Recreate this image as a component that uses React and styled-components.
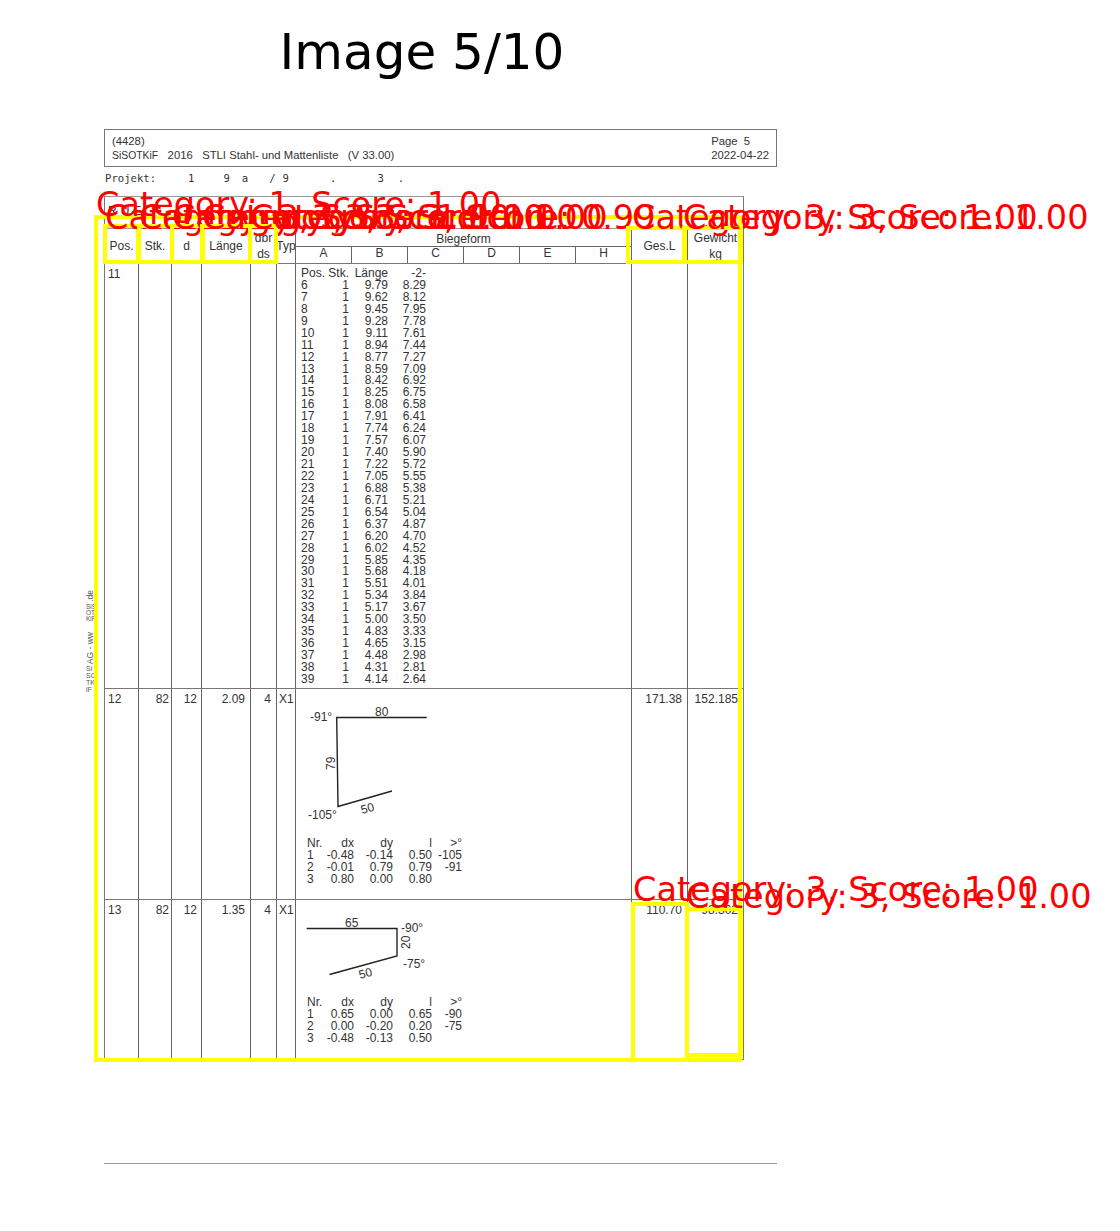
import React from 'react'
import styled, { createGlobalStyle } from 'styled-components'

const COLS = '33px 33px 30px 49px 26px 19px 336px 56px 56px'

const ROW_11 = [
  ['6', '9.79', '8.29'], ['7', '9.62', '8.12'], ['8', '9.45', '7.95'], ['9', '9.28', '7.78'],
  ['10', '9.11', '7.61'], ['11', '8.94', '7.44'], ['12', '8.77', '7.27'], ['13', '8.59', '7.09'],
  ['14', '8.42', '6.92'], ['15', '8.25', '6.75'], ['16', '8.08', '6.58'], ['17', '7.91', '6.41'],
  ['18', '7.74', '6.24'], ['19', '7.57', '6.07'], ['20', '7.40', '5.90'], ['21', '7.22', '5.72'],
  ['22', '7.05', '5.55'], ['23', '6.88', '5.38'], ['24', '6.71', '5.21'], ['25', '6.54', '5.04'],
  ['26', '6.37', '4.87'], ['27', '6.20', '4.70'], ['28', '6.02', '4.52'], ['29', '5.85', '4.35'],
  ['30', '5.68', '4.18'], ['31', '5.51', '4.01'], ['32', '5.34', '3.84'], ['33', '5.17', '3.67'],
  ['34', '5.00', '3.50'], ['35', '4.83', '3.33'], ['36', '4.65', '3.15'], ['37', '4.48', '2.98'],
  ['38', '4.31', '2.81'], ['39', '4.14', '2.64'],
]

const SEGMENTS_12 = [
  ['Nr.', 'dx', 'dy', 'l', '>°'],
  ['1', '-0.48', '-0.14', '0.50', '-105'],
  ['2', '-0.01', '0.79', '0.79', '-91'],
  ['3', '0.80', '0.00', '0.80', ''],
]

const SEGMENTS_13 = [
  ['Nr.', 'dx', 'dy', 'l', '>°'],
  ['1', '0.65', '0.00', '0.65', '-90'],
  ['2', '0.00', '-0.20', '0.20', '-75'],
  ['3', '-0.48', '-0.13', '0.50', ''],
]

const BOXES = [
  { x: 94, y: 215, w: 648, h: 847, label: 'Category: 1, Score: 1.00', lift: -2, dx: 0 },
  { x: 103, y: 224, w: 37, h: 40, label: 'Category: 3, Score: 1.00' },
  { x: 137, y: 224, w: 37, h: 40, label: 'Category: 3, Score: 1.00' },
  { x: 170, y: 224, w: 35, h: 40, label: 'Category: 3, Score: 1.00' },
  { x: 200, y: 224, w: 52, h: 40, label: 'Category: 3, Score: 1.00' },
  { x: 248, y: 224, w: 30, h: 40, label: 'Category: 3, Score: 0.99' },
  { x: 626, y: 226, w: 61, h: 38, label: 'Category: 3, Score: 1.00', lift: -4, dx: 4 },
  { x: 682, y: 226, w: 61, h: 38, label: 'Category: 3, Score: 1.00', lift: -4, dx: -1 },
  { x: 631, y: 902, w: 58, h: 160, label: 'Category: 3, Score: 1.00', lift: 0, dx: 0 },
  { x: 685, y: 907, w: 58, h: 150, label: 'Category: 3, Score: 1.00', lift: -2, dx: -1 },
]

const GlobalStyle = createGlobalStyle`
  html, body { margin: 0; background: #fff; overflow: hidden; }
`

const Stage = styled.div`
  position: relative;
  width: 1120px;
  height: 1231px;
  overflow: hidden;
  font-family: 'Liberation Sans', Arial, sans-serif;
  color: #333;
`

const FigureTitle = styled.h1`
  width: 844px;
  margin: 0;
  padding-top: 24px;
  height: 129px;
  box-sizing: border-box;
  text-align: center;
  font: 400 50px/56px 'DejaVu Sans', sans-serif;
  color: #000;
`

const Sheet = styled.div`
  display: flex;
`

const Margin = styled.div`
  width: 104px;
  padding: 461px 0 0 86px;
  box-sizing: border-box;
`

const SideNote = styled.div`
  display: flex;
  flex-direction: column;
  align-items: flex-start;
  color: #555;
`

const SideTurned = styled.span`
  writing-mode: vertical-rl;
  transform: rotate(180deg);
  margin: ${(p) => p.$margin};
  font-size: 8.5px;
  line-height: 9px;
  white-space: nowrap;
`

const SideBlock = styled.div`
  font-size: ${(p) => p.$size}px;
  line-height: ${(p) => p.$line}px;
  white-space: pre;
`

const Content = styled.div`
  width: 673px;
`

const PageHeader = styled.header`
  height: 38px;
  border: 1px solid #777;
  box-sizing: border-box;
  padding: 4px 7px 0 7px;
  display: flex;
  justify-content: space-between;
  font-size: 11.3px;
  line-height: 14px;
`

const HeaderLine = styled.div`
  white-space: pre;
`

const Brand = styled.span`
  font-size: 10.4px;
`

const ProjectLine = styled.div`
  height: 29px;
  padding: 5px 0 0 1px;
  box-sizing: border-box;
  display: flex;
  font: 10.6px/13px 'DejaVu Sans Mono', monospace;
  color: #333;
`

const ProjectMark = styled.span`
  margin-left: ${(p) => p.$gap}px;
`

const ListTable = styled.div`
  width: 640px;
  border: 1px solid #777;
  border-top-color: #999;
  box-sizing: border-box;
`

const TitleBar = styled.div`
  height: 32px;
  padding: 7px 0 0 3px;
  box-sizing: border-box;
  border-bottom: 1px solid #999;
  font-size: 12px;
  letter-spacing: 4px;
`

const Row = styled.div`
  display: grid;
  grid-template-columns: ${COLS};
  height: ${(p) => p.$height}px;
  border-bottom: ${(p) => (p.$last ? 'none' : '1px solid #777')};
  box-sizing: border-box;
`

const HeadCell = styled.div`
  border-left: ${(p) => (p.$first ? 'none' : '1px solid #666')};
  padding-top: 1px;
  display: flex;
  flex-direction: column;
  align-items: center;
  justify-content: center;
  font-size: 12px;
  line-height: 15.5px;
  white-space: nowrap;
  overflow: visible;
`

const BendHead = styled.div`
  border-left: 1px solid #666;
  display: flex;
  flex-direction: column;
`

const BendTitle = styled.div`
  height: 18px;
  box-sizing: border-box;
  text-align: center;
  font-size: 12px;
  line-height: 20px;
  border-bottom: 1px solid #666;
`

const BendLetters = styled.div`
  flex: 1;
  display: grid;
  grid-template-columns: 55px repeat(5, 56px);
`

const BendLetter = styled.div`
  border-left: ${(p) => (p.$first ? 'none' : '1px solid #666')};
  text-align: center;
  font-size: 12px;
  line-height: 13px;
`

const Cell = styled.div`
  border-left: ${(p) => (p.$first ? 'none' : '1px solid #666')};
  padding: 3px ${(p) => p.$right ?? 5}px 0 ${(p) => (p.$first ? 3 : 2)}px;
  text-align: ${(p) => (p.$left ? 'left' : 'right')};
  font-size: 12px;
  line-height: 14px;
  min-width: 0;
`

const BendCell = styled.div`
  border-left: 1px solid #666;
  font-size: 12px;
  line-height: 11.94px;
  color: #333;
`

const BarList = styled.div`
  display: grid;
  grid-template-columns: 26px 22px 39px 38px;
  padding: 4px 0 0 5px;
  text-align: right;
`

const BarHead = styled.span`
  text-align: left;
`

const Shape = styled.svg`
  display: block;
  font-family: 'Liberation Sans', Arial, sans-serif;
  font-size: 12px;
  fill: #333;
`

const SegmentList = styled.div`
  display: grid;
  grid-template-columns: 12px 35px 39px 39px 30px;
  margin-left: ${(p) => p.$indent}px;
  text-align: right;
`

const SegmentValue = styled.span`
  &:nth-child(5n + 1) { text-align: left; white-space: nowrap; }
`

const FootRule = styled.div`
  margin-top: 103px;
  border-top: 1px solid #999;
`

const Detection = styled.div`
  position: absolute;
  left: ${(p) => p.$x}px;
  top: ${(p) => p.$y}px;
  width: ${(p) => p.$w}px;
  height: ${(p) => p.$h}px;
  box-sizing: border-box;
  border: 4px solid #ff0;
`

/* baseline of the 40px line box sits about 8px above its bottom */
const DetectionLabel = styled.span`
  position: absolute;
  left: ${(p) => p.$dx - 2}px;
  bottom: calc(100% - 4px + ${(p) => p.$lift}px);
  font: 33.5px/40px 'DejaVu Sans', sans-serif;
  color: #f00;
  white-space: nowrap;
`

const BarRows = () => (
  <BarList>
    <BarHead>Pos.</BarHead>
    <span>Stk.</span>
    <span>Länge</span>
    <span>-2-</span>
    {ROW_11.map(([pos, a, b]) => (
      <React.Fragment key={pos}>
        <BarHead>{pos}</BarHead>
        <span>1</span>
        <span>{a}</span>
        <span>{b}</span>
      </React.Fragment>
    ))}
  </BarList>
)

const Segments = ({ rows }) => (
  <SegmentList $indent={11}>
    {rows.flat().map((value, i) => (
      <SegmentValue key={i}>{value}</SegmentValue>
    ))}
  </SegmentList>
)

const ShapeTwelve = () => (
  <Shape width="335" height="149" viewBox="0 0 335 149">
    <path d="M130.7 28.5 H40.7 L42 117.5 L96 102" fill="none" stroke="#222" strokeWidth="1.4" />
    <text x="79" y="27">80</text>
    <text x="14" y="32">-91°</text>
    <text transform="translate(39 81) rotate(-90)">79</text>
    <text x="12" y="130">-105°</text>
    <text transform="translate(66 125) rotate(-15)">50</text>
  </Shape>
)

const ShapeThirteen = () => (
  <Shape width="335" height="97" viewBox="0 0 335 97">
    <path d="M10.7 28.5 H101 V56 L33.5 74.5" fill="none" stroke="#222" strokeWidth="1.4" />
    <text x="49" y="27">65</text>
    <text x="105" y="32">-90°</text>
    <text transform="translate(114 49) rotate(-90)">20</text>
    <text x="107" y="68">-75°</text>
    <text transform="translate(64 79) rotate(-15)">50</text>
  </Shape>
)

export default function App() {
  return (
    <Stage>
      <GlobalStyle />
      <FigureTitle>Image 5/10</FigureTitle>
      <Sheet>
        <Margin>
          <SideNote>
            <SideTurned $margin="0 0 2px 0">.de</SideTurned>
            <SideBlock $size={6.5} $line={6.3}>{'SiS\nOT\nKiF'}</SideBlock>
            <SideTurned $margin="9px 0 1px 0">AG - ww</SideTurned>
            <SideBlock $size={7} $line={7}>{'Si\nSC\nTK\niF'}</SideBlock>
          </SideNote>
        </Margin>
        <Content>
          <PageHeader>
            <div>
              <HeaderLine>(4428)</HeaderLine>
              <HeaderLine><Brand>SiSOTKiF</Brand>   2016   STLI Stahl- und Mattenliste   (V 33.00)</HeaderLine>
            </div>
            <div>
              <HeaderLine>Page  5</HeaderLine>
              <HeaderLine>2022-04-22</HeaderLine>
            </div>
          </PageHeader>
          <ProjectLine>
            <span>Projekt:</span>
            <ProjectMark $gap={32}>1</ProjectMark>
            <ProjectMark $gap={29}>9</ProjectMark>
            <ProjectMark $gap={12}>a</ProjectMark>
            <ProjectMark $gap={21}>/</ProjectMark>
            <ProjectMark $gap={7}>9</ProjectMark>
            <ProjectMark $gap={41}>.</ProjectMark>
            <ProjectMark $gap={41}>3</ProjectMark>
            <ProjectMark $gap={14}>.</ProjectMark>
          </ProjectLine>
          <ListTable>
            <TitleBar>RUE</TitleBar>
            <Row $height={35}>
              <HeadCell $first>Pos.</HeadCell>
              <HeadCell>Stk.</HeadCell>
              <HeadCell>d</HeadCell>
              <HeadCell>Länge</HeadCell>
              <HeadCell>
                <span>dbr</span>
                <span>ds</span>
              </HeadCell>
              <HeadCell>Typ</HeadCell>
              <BendHead>
                <BendTitle>Biegeform</BendTitle>
                <BendLetters>
                  {['A', 'B', 'C', 'D', 'E', 'H'].map((letter, i) => (
                    <BendLetter key={letter} $first={i === 0}>{letter}</BendLetter>
                  ))}
                </BendLetters>
              </BendHead>
              <HeadCell>Ges.L</HeadCell>
              <HeadCell>
                <span>Gewicht</span>
                <span>kg</span>
              </HeadCell>
            </Row>
            <Row $height={425}>
              <Cell $first $left>11</Cell>
              <Cell />
              <Cell />
              <Cell />
              <Cell />
              <Cell />
              <BendCell>
                <BarRows />
              </BendCell>
              <Cell />
              <Cell />
            </Row>
            <Row $height={211}>
              <Cell $first $left>12</Cell>
              <Cell $right={2}>82</Cell>
              <Cell $right={4}>12</Cell>
              <Cell>2.09</Cell>
              <Cell>4</Cell>
              <Cell $left>X1</Cell>
              <BendCell>
                <ShapeTwelve />
                <Segments rows={SEGMENTS_12} />
              </BendCell>
              <Cell>171.38</Cell>
              <Cell>152.185</Cell>
            </Row>
            <Row $height={159} $last>
              <Cell $first $left>13</Cell>
              <Cell $right={2}>82</Cell>
              <Cell $right={4}>12</Cell>
              <Cell>1.35</Cell>
              <Cell>4</Cell>
              <Cell $left>X1</Cell>
              <BendCell>
                <ShapeThirteen />
                <Segments rows={SEGMENTS_13} />
              </BendCell>
              <Cell>110.70</Cell>
              <Cell>98.302</Cell>
            </Row>
          </ListTable>
          <FootRule />
        </Content>
      </Sheet>
      {BOXES.map((box, i) => (
        <Detection key={i} $x={box.x} $y={box.y} $w={box.w} $h={box.h}>
          <DetectionLabel $lift={box.lift ?? -6} $dx={box.dx ?? 0}>{box.label}</DetectionLabel>
        </Detection>
      ))}
    </Stage>
  )
}
